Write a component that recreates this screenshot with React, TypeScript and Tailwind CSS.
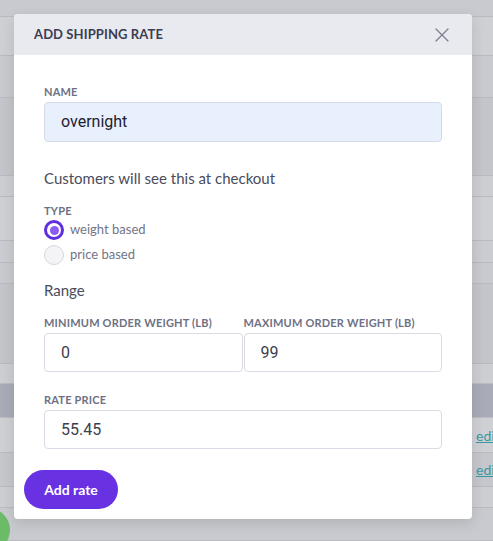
import { X } from "lucide-react";

const rows = [
  { h: "h-[17px]", bg: "bg-[#c9cacf]" },
  { h: "h-[39px]", bg: "bg-[#cfd0d4]" },
  { h: "h-[42px]", bg: "bg-[#c9cacf]" },
  { h: "h-[78px]", bg: "bg-[#c4c5cb]" },
  { h: "h-[21px]", bg: "bg-[#cdced2]" },
  { h: "h-[44px]", bg: "bg-[#cfd0d4]" },
  { h: "h-[22px]", bg: "bg-[#caccd1]" },
  { h: "h-[21px]", bg: "bg-[#c9cacf]" },
  { h: "h-[80px]", bg: "bg-[#c4c5cb]" },
  { h: "h-[20px]", bg: "bg-[#cdced2]" },
  { h: "h-[34px]", bg: "bg-[#a9acb8]" },
  { h: "h-[35px]", bg: "bg-[#cfd0d4]", link: true },
  { h: "h-[34px]", bg: "bg-[#c5c7cd]", link: true },
  { h: "h-[21px]", bg: "bg-[#cdced2]" },
  { h: "h-[33px]", bg: "bg-[#c9cacf]" },
];

function Label({ children }: { children: React.ReactNode }) {
  return (
    <div className="text-[11px] leading-[14px] font-bold uppercase tracking-[0.2px] text-[#6e7184]">
      {children}
    </div>
  );
}

function Field({ value, autofill }: { value: string; autofill?: boolean }) {
  return (
    <div
      className={`h-[39px] flex items-center pl-4 rounded border font-['Roboto'] text-[16px] ${
        autofill
          ? "h-[40px] bg-[#e8f0fe] border-[#d3dbeb] text-[#1f2030]"
          : "bg-white border-[#dadbe4] text-[#3c3e4e]"
      }`}>
      {value}
    </div>
  );
}

export default function App() {
  return (
    <div className="relative w-[493px] h-[541px] overflow-hidden bg-[#c9cacf] font-['Lato',sans-serif]">
      {/* dimmed page behind the modal */}
      <div className="flex flex-col">
        {rows.map((r, i) => (
          <div
            key={i}
            className={`${r.h} ${r.bg} border-b border-[#babbc2] flex items-center pl-[476px] whitespace-nowrap overflow-hidden`}>
            {r.link && <span className="text-[14px] text-[#3a98a3] underline">edit</span>}
          </div>
        ))}
      </div>
      <div className="absolute left-[-34px] top-[508px] w-[44px] h-[44px] rounded-full bg-[#6cbb68]" />

      {/* modal */}
      <div className="absolute top-[14px] left-[14px] w-[458px] bg-white rounded shadow-[0_4px_14px_rgba(0,0,0,0.12)] overflow-hidden">
        <div className="h-[41px] bg-[#e9eaf0] flex items-center justify-between pl-5 pr-[18px]">
          <div className="text-[13px] font-bold text-[#3b3d52] tracking-[0.1px]">ADD SHIPPING RATE</div>
          <X size={24} strokeWidth={1.2} className="text-[#7b7e8d]" />
        </div>

        <div className="px-[30px] pt-[30px] flex flex-col">
          <Label>Name</Label>
          <div className="mt-[3px]">
            <Field value="overnight" autofill />
          </div>

          <div className="mt-[26px] text-[15px] leading-5 text-[#4a4c5c]">Customers will see this at checkout</div>

          <div className="mt-[16px]">
            <Label>Type</Label>
          </div>
          <div className="mt-[2px] flex items-center gap-[6px] h-5">
            <span className="w-5 h-5 rounded-full border-[3px] border-[#5f2ede] bg-white flex items-center justify-center">
              <span className="w-[9px] h-[9px] rounded-full bg-[#8a5cf2]" />
            </span>
            <span className="text-[13px] text-[#727487]">weight based</span>
          </div>
          <div className="mt-[5px] flex items-center gap-[6px] h-5">
            <span className="w-5 h-5 rounded-full border border-[#d5d6de] bg-[#f4f4f7]" />
            <span className="text-[13px] text-[#727487]">price based</span>
          </div>

          <div className="mt-[15px] text-[15px] leading-5 text-[#4a4c5c]">Range</div>

          <div className="mt-[16px] grid grid-cols-2 gap-x-px">
            <div>
              <Label>Minimum order weight (lb)</Label>
              <div className="mt-[3px]">
                <Field value="0" />
              </div>
            </div>
            <div>
              <Label>Maximum order weight (lb)</Label>
              <div className="mt-[3px]">
                <Field value="99" />
              </div>
            </div>
          </div>

          <div className="mt-[21px]">
            <Label>Rate price</Label>
          </div>
          <div className="mt-[3px]">
            <Field value="55.45" />
          </div>
        </div>

        <div className="px-[10px] pt-[21px] pb-[10px]">
          <button className="h-[39px] w-[94px] rounded-full bg-[#6832e3] text-white text-[14px] font-bold">
            Add rate
          </button>
        </div>
      </div>
    </div>
  );
}
